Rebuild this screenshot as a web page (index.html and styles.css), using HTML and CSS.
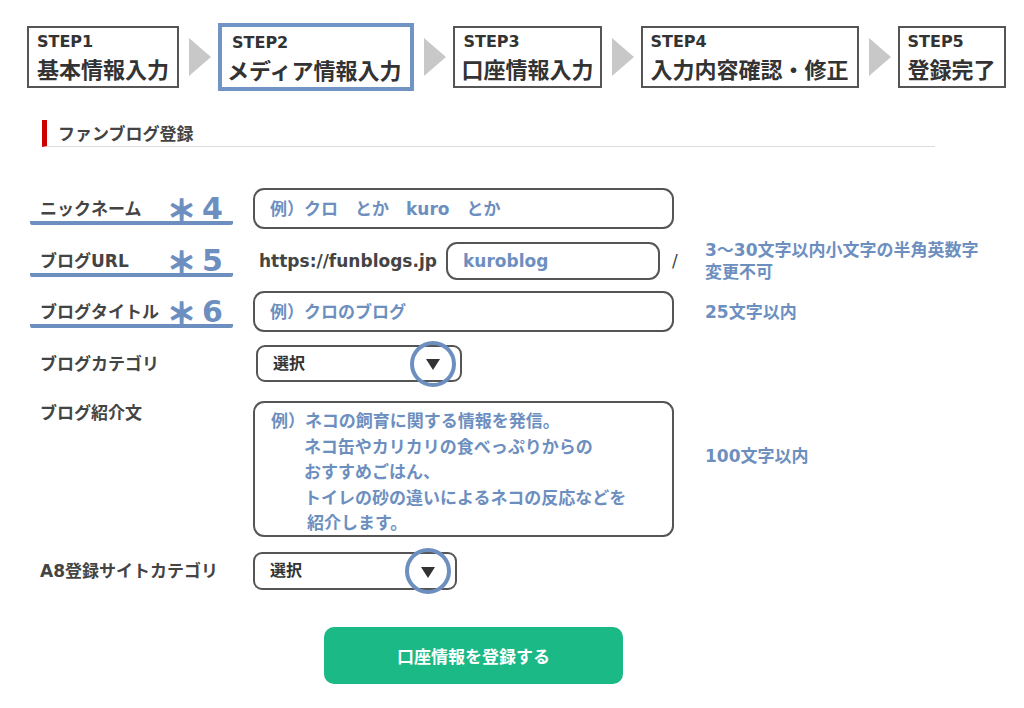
FILE: index.html
```html
<!DOCTYPE html>
<html lang="ja">
  <head>
    <meta charset="UTF-8" />
    <title>ファンブログ登録</title>
    <link rel="stylesheet" href="styles.css">
  </head>
  <body>
    <ol class="steps">
      <li class="step"><span class="step-no">STEP1</span><span class="step-name">基本情報入力</span></li>
      <li class="step-arrow"></li>
      <li class="step current"><span class="step-no">STEP2</span><span class="step-name">メディア情報入力</span></li>
      <li class="step-arrow"></li>
      <li class="step tight"><span class="step-no">STEP3</span><span class="step-name">口座情報入力</span></li>
      <li class="step-arrow"></li>
      <li class="step"><span class="step-no">STEP4</span><span class="step-name">入力内容確認・修正</span></li>
      <li class="step-arrow"></li>
      <li class="step"><span class="step-no">STEP5</span><span class="step-name">登録完了</span></li>
    </ol>

    <h2 class="section-title">ファンブログ登録</h2>

    <form class="blog-form">
      <div class="row">
        <label class="label mark"><span class="label-text">ニックネーム</span><span class="star">＊</span><span class="num">4</span></label>
        <input class="field" type="text" placeholder="例）クロ　とか　kuro　とか">
      </div>

      <div class="row row-url">
        <label class="label mark"><span class="label-text">ブログURL</span><span class="star">＊</span><span class="num">5</span></label>
        <div class="url-field">
          <span class="url-prefix">https://funblogs.jp</span>
          <input class="field url-input" type="text" placeholder="kuroblog">
          <span class="slash">/</span>
        </div>
        <p class="note">3〜30文字以内小文字の半角英数字<br>変更不可</p>
      </div>

      <div class="row">
        <label class="label mark"><span class="label-text">ブログタイトル</span><span class="star">＊</span><span class="num">6</span></label>
        <input class="field" type="text" placeholder="例）クロのブログ">
        <p class="note">25文字以内</p>
      </div>

      <div class="row">
        <label class="label">ブログカテゴリ</label>
        <div class="select select-cat">選択<span class="pick"><span class="tri"></span></span></div>
      </div>

      <div class="row row-tall">
        <label class="label">ブログ紹介文</label>
        <div class="textarea">
          <span>例）ネコの飼育に関する情報を発信。</span>
          <span class="indent">ネコ缶やカリカリの食べっぷりからの</span>
          <span class="indent">おすすめごはん、</span>
          <span class="indent">トイレの砂の違いによるネコの反応などを</span>
          <span class="indent more">紹介します。</span>
        </div>
        <p class="note note-mid">100文字以内</p>
      </div>

      <div class="row">
        <label class="label">A8登録サイトカテゴリ</label>
        <div class="select">選択<span class="pick"><span class="tri"></span></span></div>
      </div>

      <button class="submit-btn" type="button">口座情報を登録する</button>
    </form>
  </body>
</html>
```

FILE: styles.css
```css
* {
  margin: 0;
  padding: 0;
  box-sizing: border-box;
}

body {
  font-family: "DejaVu Sans", "Noto Sans CJK JP", sans-serif;
  font-weight: bold;
  color: #444;
  background: #fff;
}

/* step bar */
.steps {
  display: flex;
  align-items: center;
  list-style: none;
  padding: 23px 0 0 27px;
}

.step {
  border: 2px solid #555;
  padding: 4px 8px 1px;
  color: #333;
}

.step.tight {
  padding: 4px 6px 1px;
}

.step.current {
  border: 4px solid #7095c5;
  padding: 6px 9px 1px 5px;
}

.step-no {
  display: block;
  font-size: 16px;
  line-height: 20px;
}

.current .step-no {
  padding-left: 5px;
}

.tight .step-no {
  padding-left: 2px;
}

.step-name {
  display: block;
  font-family: "Noto Sans CJK JP", sans-serif;
  font-size: 22px;
  line-height: 33px;
}

.step-arrow {
  width: 0;
  height: 0;
  border-left: 22px solid #c8c8c8;
  border-top: 19px solid transparent;
  border-bottom: 19px solid transparent;
  margin: 0 7px 0 10px;
}

/* section */
.section-title {
  margin: 29px 0 0 42px;
  width: 893px;
  border-left: 5px solid #cc0000;
  border-bottom: 1px solid #dcdcdc;
  padding-left: 11px;
  font-family: "Noto Sans CJK JP", sans-serif;
  font-size: 17px;
  line-height: 26px;
  color: #444;
}

.blog-form {
  margin-top: 41px;
  padding-left: 30px;
  display: flex;
  flex-direction: column;
  gap: 13px;
}

.row {
  display: grid;
  grid-template-columns: 203px 421px 1fr;
  column-gap: 20px;
  align-items: center;
}

.row-url {
  grid-template-rows: 38px;
  margin-bottom: -2px;
}

.row-tall {
  margin: 6px 0 2px;
  align-items: start;
}

.label {
  font-size: 17px;
  line-height: 24px;
  padding-left: 10px;
  color: #444;
  white-space: nowrap;
}

.label.mark {
  display: flex;
  align-items: center;
  margin-top: 4px;
  border-bottom: 4px solid #6d8fc0;
  border-radius: 2px;
}

.label-text {
  width: 127px;
}

.star {
  font-family: "Noto Sans CJK JP", sans-serif;
  font-size: 29px;
  line-height: 24px;
  color: #6d8fc0;
  -webkit-text-stroke: 1.3px #6d8fc0;
  margin-right: 6px;
}

.num {
  font-size: 30px;
  line-height: 24px;
  color: #6d8fc0;
}

.field {
  height: 41px;
  width: 421px;
  border: 2px solid #555;
  border-radius: 11px;
  padding: 0 15px;
  font: inherit;
  font-size: 17px;
  color: #6d8fc0;
  background: #fff;
  outline: none;
}

.field::placeholder {
  color: #6d8fc0;
  opacity: 1;
}

.url-field {
  display: flex;
  align-items: center;
}

.url-prefix {
  flex-shrink: 0;
  width: 193px;
  padding-left: 6px;
  font-size: 17px;
  color: #444;
  white-space: nowrap;
}

.field.url-input {
  flex-shrink: 0;
  width: 214px;
  height: 38px;
}

.slash {
  flex-shrink: 0;
  margin-left: 12px;
  font-size: 17px;
  font-weight: normal;
  color: #444;
}

.note {
  padding-left: 11px;
  font-size: 17px;
  line-height: 22px;
  color: #6d8fc0;
  white-space: nowrap;
}

.note-mid {
  margin-top: 44px;
}

/* pseudo selects */
.select {
  position: relative;
  width: 204px;
  height: 38px;
  border: 2px solid #555;
  border-radius: 9px;
  padding-left: 15px;
  font-size: 16px;
  line-height: 34px;
  color: #333;
}

.select-cat {
  width: 206px;
  height: 37px;
  margin-left: 3px;
  line-height: 33px;
}

.pick {
  position: absolute;
  right: 4px;
  top: 50%;
  transform: translateY(-50%);
  width: 46px;
  height: 46px;
  border: 4px solid #6d8fc0;
  border-radius: 50%;
  display: flex;
  align-items: center;
  justify-content: center;
}

.tri {
  width: 0;
  height: 0;
  border-top: 11px solid #333;
  border-left: 7px solid transparent;
  border-right: 7px solid transparent;
  margin-top: 2px;
}

/* textarea */
.textarea {
  display: flex;
  flex-direction: column;
  height: 136px;
  border: 2px solid #555;
  border-radius: 11px;
  padding: 4px 16px;
  font-family: "Noto Sans CJK JP", sans-serif;
  font-size: 17px;
  line-height: 25.5px;
  color: #6d8fc0;
}

.textarea .indent {
  padding-left: 33px;
}

.textarea .more {
  padding-left: 36px;
}

.submit-btn {
  margin: 24px 0 0 294px;
  width: 299px;
  height: 57px;
  border: none;
  border-radius: 10px;
  background: #1bb985;
  color: #fff;
  font-family: "Noto Sans CJK JP", sans-serif;
  font-weight: bold;
  font-size: 17px;
}
```
